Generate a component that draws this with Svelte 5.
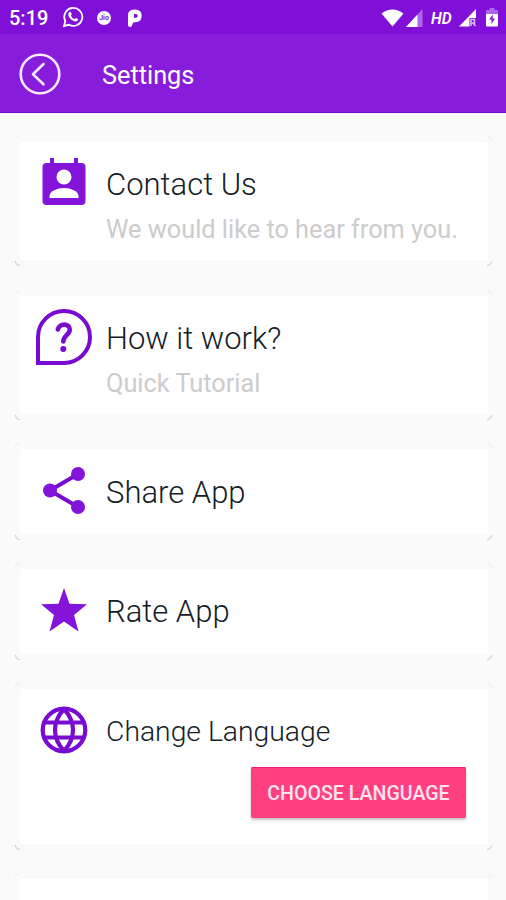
<script lang="ts">
interface Item {
  icon: string;
  title: string;
  subtitle?: string;
  action?: string;
  height: number;
}

const items: Item[] = [
  { icon: "contact", title: "Contact Us", subtitle: "We would like to hear from you.", height: 118 },
  { icon: "help", title: "How it work?", subtitle: "Quick Tutorial", height: 118 },
  { icon: "share", title: "Share App", height: 85 },
  { icon: "star", title: "Rate App", height: 85 },
  { icon: "globe", title: "Change Language", action: "Choose Language", height: 155 },
];
</script>

<div class="screen">
  <div class="status-bar">
    <span class="time">5:19</span>
    <svg class="whatsapp" width="22" height="22" viewBox="0 0 22 22" fill="none">
      <path d="M2 20l1.3-5A9 9 0 1 1 7 18.8z" stroke="#fff" stroke-width="1.8" />
      <path d="M7.2 6.2c.8-.7 1.6-.3 1.9.5l.6 1.5c.1.5-.8 1.2-.8 1.5.7 1.6 1.9 2.7 3.5 3.3.4 0 1-1.2 1.5-1l1.9 1c.6.3.2 1.3-.3 1.8-2.5 2.4-9.8-2.6-9.2-6.8.1-.7.4-1.4.9-1.8z" fill="#fff" />
    </svg>
    <span class="jio">Jio</span>
    <svg class="parking" width="16" height="19" viewBox="0 0 16 19">
      <path fill-rule="evenodd" d="M1 16V5.500Q1.500.5 8 .5q6.700.3 6.700 6.200-.2 6.300-6.700 6.600-2.500 0-2.600 2.200Q5 18 3 18q-2 0-2-2zM7 5v3.800q3.800.2 3.800-2.100T7 5z" fill="#fff" />
    </svg>
    <div class="signals">
      <svg width="23" height="18" viewBox="0 0 23 18">
        <path d="M.5 4.500Q11.500-3.500 22.500 4.500L11.500 17.500z" fill="#fff" />
      </svg>
      <svg class="cell" width="17" height="18" viewBox="0 0 17 18">
        <path d="M0 18L16.500 0V18z" fill="#ad64e8" />
        <path d="M0 18L11.500 5.500V18z" fill="#fff" />
      </svg>
      <span class="hd">HD</span>
      <svg class="roaming" width="18" height="18" viewBox="0 0 18 18">
        <path d="M0 17.500L17 0V9H10.500V17.500z" fill="#fff" />
        <path d="M12 17V10.500h3.500v3.500H12m2 0l2.500 3" stroke="#dcbcf6" stroke-width="1.500" fill="none" />
      </svg>
      <svg class="battery" width="12" height="19" viewBox="0 0 12 19">
        <path d="M3.500 0h5v2H12v4H0V2h3.500z" fill="#ad64e8" />
        <path d="M0 6h12v11.500q0 1-1 1H1q-1 0-1-1z" fill="#fff" />
        <path d="M7 6.500l-4 5h2.500V16l3.500-5.500H6.500z" fill="#8414da" />
      </svg>
    </div>
  </div>

  <header class="toolbar">
    <button class="back" aria-label="Back">
      <svg width="42" height="42" viewBox="0 0 42 42" fill="none" stroke="#fbe9ff">
        <circle cx="21" cy="21" r="19.300" stroke-width="2.600" />
        <path d="M24.500 11L14 21.300l10.500 10" stroke-width="2.600" stroke-linecap="round" stroke-linejoin="round" />
      </svg>
    </button>
    <h1>Settings</h1>
  </header>

  <main>
    {#each items as item}
      <section class="card">
        <div class="panel" style:height="{item.height}px">
          <div class="icon">
            {#if item.icon === "contact"}
              <svg width="60" height="60" viewBox="0 0 60 60">
                <path d="M9.500 14q0-4 4-4H17V5h4v5h20V5h4v5h3.500q4 0 4 4v34q0 4-4 4h-35q-4 0-4-4z" fill="#8414da" />
                <circle cx="31" cy="24" r="7.500" fill="#fff" />
                <path d="M16.500 45v-2c0-5 8-8 14.500-8s14.500 3 14.500 8v2z" fill="#fff" />
              </svg>
            {:else if item.icon === "help"}
              <svg width="60" height="60" viewBox="0 0 60 60" fill="none" stroke="#780bd2">
                <path d="M5 56V30A26 26 0 1 1 31 56z" stroke-width="4" />
                <path d="M24.800 22.500c1.200-6.500 12-6.500 12 0 0 5.500-6.500 6-6.500 12" stroke-width="4.600" stroke-linecap="round" />
                <circle cx="30.300" cy="42" r="3" fill="#780bd2" stroke="none" />
              </svg>
            {:else if item.icon === "share"}
              <svg width="60" height="60" viewBox="0 0 60 60" fill="#8414da">
                <path d="M45 14L17 30.500 45 47" fill="none" stroke="#780bd2" stroke-width="4" />
                <circle cx="45" cy="14" r="7" />
                <circle cx="17" cy="30.500" r="7" />
                <circle cx="45" cy="47" r="7" />
              </svg>
            {:else if item.icon === "star"}
              <svg width="60" height="60" viewBox="0 0 60 60">
                <path d="M31 8l5.500 15.800 17.500.500-13 10.700 4.500 16.500L31 41.500 16.500 51.500 21 35 8 24.300l17.500-.500z" fill="#8414da" />
              </svg>
            {:else}
              <svg width="60" height="60" viewBox="0 0 60 60" fill="none" stroke="#780bd2" stroke-width="4.200">
                <circle cx="31" cy="30" r="21.300" />
                <path d="M11 22.500h40M11 37.500h40M31 9c-12 13-12 29 0 42M31 9c12 13 12 29 0 42" />
              </svg>
            {/if}
          </div>
          <div class="text">
            <h2 class:compact={item.action}>{item.title}</h2>
            {#if item.subtitle}
              <p>{item.subtitle}</p>
            {/if}
          </div>
          {#if item.action}
            <button class="action">{item.action}</button>
          {/if}
        </div>
      </section>
    {/each}
    <section class="card">
      <div class="panel" style:height="118px"></div>
    </section>
  </main>
</div>

<style>
:global(body) {
  margin: 0;
  overflow: hidden;
}

.screen {
  width: 506px;
  height: 900px;
  overflow: hidden;
  background: #fafafa;
  font-family: Roboto, "Liberation Sans", sans-serif;
}

.status-bar {
  display: flex;
  align-items: center;
  height: 34px;
  padding: 0 8px 0 9px;
  background: #8010d8;
  color: #fff;
}

.time {
  width: 53px;
  padding-top: 2px;
  font-size: 20px;
  line-height: 32px;
  font-weight: 500;
}

.jio {
  width: 14px;
  height: 14px;
  margin: 1px 0 0 13px;
  border-radius: 50%;
  background: #fff;
  color: #8010d8;
  font-size: 7px;
  line-height: 14px;
  font-weight: 700;
  text-align: center;
}

.parking {
  margin: 2px 0 0 16px;
}

.signals {
  display: flex;
  align-items: center;
  margin-left: auto;
  padding-top: 1px;
}

.cell {
  margin-left: 2px;
}

.hd {
  width: 21px;
  margin-left: 8px;
  font-size: 17px;
  line-height: 20px;
  font-weight: 600;
  font-style: italic;
  transform: scaleX(0.92);
  transform-origin: left;
}

.roaming {
  margin-left: 7px;
}

.battery {
  margin-left: 9px;
}

.toolbar {
  display: flex;
  align-items: center;
  box-sizing: border-box;
  height: 79px;
  padding: 2px 0 0 19px;
  border-bottom: 1px solid #780bd2;
  background: #871cdb;
}

button {
  padding: 0;
  border: none;
  background: none;
  font-family: inherit;
}

.back {
  display: flex;
}

h1 {
  margin: 3px 0 0 41px;
  color: #fff;
  font-size: 25.3px;
  line-height: 30px;
  font-weight: 400;
}

main {
  display: flex;
  flex-direction: column;
  gap: 24px;
  padding: 23px 14px 0 15px;
}

/* only the corners of the card shadow are visible */
.card {
  padding: 6px 4px 6px 5px;
  background:
    radial-gradient(circle at 100% 0, transparent 3.5px, #ccc 4.5px, transparent 5.5px) left bottom / 5px 5px no-repeat,
    radial-gradient(circle at 0 0, transparent 3.5px, #ccc 4.5px, transparent 5.5px) right bottom / 5px 5px no-repeat,
    radial-gradient(circle at 100% 100%, transparent 3.5px, #eee 4.5px, transparent 5.5px) left top / 5px 5px no-repeat,
    radial-gradient(circle at 0 100%, transparent 3.5px, #eee 4.5px, transparent 5.5px) right top / 5px 5px no-repeat;
}

.card:nth-child(n + 3) {
  margin-top: -1px;
}

.panel {
  display: grid;
  grid-template-columns: 86px 1fr;
  grid-template-rows: auto 1fr;
  background: #fff;
}

.card:nth-child(3) .text {
  padding-top: 26px;
}

.icon {
  height: 60px;
  padding: 11px 0 0 13px;
}

.icon svg {
  display: block;
}

.text {
  padding-top: 25px;
}

h2 {
  margin: 0;
  color: #142026;
  font-size: 31px;
  line-height: 36px;
  font-weight: 340;
  white-space: nowrap;
}

h2.compact {
  font-size: 28.3px;
}

p {
  margin: 12px 0 0;
  color: #ccc;
  font-size: 25.3px;
  line-height: 30px;
  font-weight: 380;
  white-space: nowrap;
}

.action {
  grid-column: 1 / -1;
  justify-self: end;
  width: 215px;
  height: 51px;
  margin: 7px 22px 0 0;
  padding-top: 2px;
  border-radius: 2px;
  background: #ff4080;
  box-shadow: 0 2px 3px rgba(0, 0, 0, 0.25), inset 0 1px 0 #f21a72;
  color: #ffe3ee;
  font-size: 19.6px;
  font-weight: 500;
  text-transform: uppercase;
}
</style>
